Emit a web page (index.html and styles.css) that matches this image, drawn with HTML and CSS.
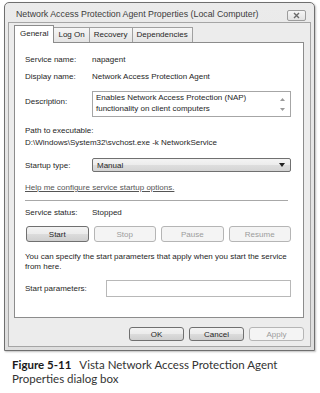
FILE: index.html
```html
<!DOCTYPE html>
<html lang="en">
<head>
  <meta charset="UTF-8">
  <meta name="viewport" content="width=device-width, initial-scale=1.0">
  <title>Network Access Protection Agent Properties</title>
  <link rel="stylesheet" href="styles.css">
</head>
<body>
  <div class="window">
    <div class="titlebar">
      <span class="title">Network Access Protection Agent Properties (Local Computer)</span>
      <span class="close-btn">
        <svg width="7" height="7" viewBox="0 0 7 7"><path d="M1 1 L6 6 M6 1 L1 6" stroke="#6a6a6a" stroke-width="1.4" fill="none"/></svg>
      </span>
    </div>

    <div class="client">
      <!-- Tab strip -->
      <div class="tabs">
        <div class="tab active">General</div>
        <div class="tab">Log On</div>
        <div class="tab">Recovery</div>
        <div class="tab">Dependencies</div>
      </div>

      <!-- General page -->
      <div class="panel">
        <div class="field">
          <span class="label">Service name:</span>
          <span>napagent</span>
        </div>
        <div class="field gap-6">
          <span class="label">Display name:</span>
          <span>Network Access Protection Agent</span>
        </div>
        <div class="field top gap-9">
          <span class="label desc-label">Description:</span>
          <div class="desc-box">
            Enables Network Access Protection (NAP)<br>functionality on client computers
            <span class="scroll-up"><svg width="5" height="3" viewBox="0 0 5 3"><path d="M0 3 L2.5 0 L5 3 Z" fill="#9a9a9a"/></svg></span>
            <span class="scroll-down"><svg width="5" height="3" viewBox="0 0 5 3"><path d="M0 0 L5 0 L2.5 3 Z" fill="#9a9a9a"/></svg></span>
          </div>
        </div>
        <div class="path gap-8">
          <div>Path to executable:</div>
          <div>D:\Windows\System32\svchost.exe -k NetworkService</div>
        </div>
        <div class="field gap-9">
          <span class="label">Startup type:</span>
          <div class="select">
            <span>Manual</span>
            <svg width="6" height="4" viewBox="0 0 6 4"><path d="M0 0 L6 0 L3 4 Z" fill="#222"/></svg>
          </div>
        </div>
        <div class="help-link gap-10">Help me configure service startup options.</div>
        <div class="separator"></div>
        <div class="field gap-6">
          <span class="label">Service status:</span>
          <span>Stopped</span>
        </div>
        <div class="svc-buttons">
          <div class="btn">Start</div>
          <div class="btn disabled">Stop</div>
          <div class="btn disabled">Pause</div>
          <div class="btn disabled">Resume</div>
        </div>
        <p class="note">You can specify the start parameters that apply when you start the service from here.</p>
        <div class="field gap-8">
          <span class="label params-label">Start parameters:</span>
          <div class="input"></div>
        </div>
      </div>

      <!-- Dialog buttons -->
      <div class="actions">
        <div class="btn">OK</div>
        <div class="btn">Cancel</div>
        <div class="btn disabled">Apply</div>
      </div>
    </div>
  </div>

  <div class="caption">
    <div><span class="fig">Figure 5-11</span><span>Vista Network Access Protection Agent</span></div>
    <div>Properties dialog box</div>
  </div>
</body>
</html>
```

FILE: styles.css
```css
/* Page */
body {
  margin: 0;
  background-color: #fff;
  font-family: "Liberation Sans", Arial, sans-serif;
  font-size: 8px;
  color: #262626;
}

/* Window frame */
.window {
  width: 311px;
  margin: 2px 0 0 4px;
  box-sizing: border-box;
  border: 1px solid #6f6f6f;
  border-radius: 5px 5px 0 0;
  background: linear-gradient(#ebebeb, #dedede);
  padding: 0 3px 3px;
  box-shadow: 1px 1px 2px rgba(0, 0, 0, 0.25);
}

.titlebar {
  display: flex;
  justify-content: space-between;
  align-items: flex-start;
  height: 19px;
  padding-left: 8px;
}

.title {
  margin-top: 6px;
  font-size: 8.8px;
  line-height: 11px;
  color: #3c3c3c;
  white-space: nowrap;
}

.close-btn {
  display: flex;
  align-items: center;
  justify-content: center;
  width: 19px;
  height: 11px;
  margin: 7px 5px 0 0;
  box-sizing: border-box;
  border: 1px solid #9c9c9c;
  border-radius: 2px;
  background: linear-gradient(#f6f6f6, #e2e2e2);
}

/* Client area */
.client {
  border: 1px solid #a5a5a5;
  background-color: #ececec;
  padding: 2px 6px 5px 5px;
}

.tabs {
  display: flex;
  align-items: flex-end;
  height: 17px;
}

.tab {
  height: 15px;
  line-height: 14px;
  padding: 0 4px;
  box-sizing: border-box;
  border: 1px solid #a0a0a0;
  border-bottom: none;
  margin-left: -1px;
  background: linear-gradient(#f6f6f6, #e4e4e4);
  white-space: nowrap;
}

.tab.active {
  position: relative;
  z-index: 1;
  height: 18px;
  margin-left: 0;
  margin-bottom: -1px;
  padding: 0 5px;
  line-height: 15px;
  border-color: #8c8c8c;
  background: #fff;
}

.panel {
  height: 276px;
  box-sizing: border-box;
  border: 1px solid #8c8c8c;
  background-color: #fff;
  padding: 11px 12px 0 10px;
}

/* Rows */
.field {
  display: flex;
  align-items: center;
  line-height: 11px;
  white-space: nowrap;
}

.field.top {
  align-items: flex-start;
}

.label {
  flex: none;
  width: 67px;
}

.gap-6 { margin-top: 6px; }
.gap-8 { margin-top: 8px; }
.gap-9 { margin-top: 9px; }
.gap-10 { margin-top: 10px; }

.desc-label {
  padding-top: 5px;
}

.desc-box {
  position: relative;
  flex: 1;
  height: 26px;
  box-sizing: border-box;
  border: 1px solid #a6a6a6;
  padding: 0 14px 0 3px;
  line-height: 11px;
}

.scroll-up,
.scroll-down {
  position: absolute;
  right: 5px;
  display: flex;
}

.scroll-up { top: 6px; }
.scroll-down { bottom: 5px; }

.path {
  line-height: 12px;
}

.select {
  flex: 1;
  display: flex;
  justify-content: space-between;
  align-items: center;
  height: 14px;
  box-sizing: border-box;
  border: 1px solid #707070;
  border-radius: 2px;
  padding: 0 5px 0 4px;
  background: linear-gradient(#f4f4f4 0%, #ececec 50%, #dedede 51%, #d4d4d4 100%);
}

.help-link {
  line-height: 11px;
  color: #555;
  text-decoration: underline;
}

.separator {
  height: 1px;
  margin: 7px 3px 0 0;
  background-color: #a8a8a8;
}

/* Buttons */
.svc-buttons {
  display: grid;
  grid-template-columns: repeat(4, 1fr);
  gap: 5px;
  margin: 8px 0 0 1px;
}

.btn {
  display: flex;
  align-items: center;
  justify-content: center;
  height: 16px;
  box-sizing: border-box;
  border: 1px solid #707070;
  border-radius: 3px;
  background: linear-gradient(#f3f3f3 0%, #ebebeb 50%, #dcdcdc 51%, #cfcfcf 100%);
}

.btn.disabled {
  border-color: #b5b5b5;
  background: #f4f4f4;
  color: #9c9c9c;
}

.note {
  margin: 10px 0 0;
  line-height: 10px;
}

.input {
  flex: 1;
  height: 17px;
  margin-left: 14px;
  box-sizing: border-box;
  border: 1px solid #b8b8b8;
  background-color: #fff;
}

.actions {
  display: flex;
  justify-content: flex-end;
  gap: 5px;
  margin-top: 9px;
}

.actions .btn {
  width: 55px;
  height: 14px;
}

/* Figure caption */
.caption {
  margin: 7px 0 0 12px;
  font-family: Lato, "Open Sans", sans-serif;
  font-size: 11.5px;
  line-height: 14px;
  color: #333;
  white-space: nowrap;
}

.fig {
  font-weight: bold;
  color: #1a1a1a;
  margin-right: 8px;
}
```
